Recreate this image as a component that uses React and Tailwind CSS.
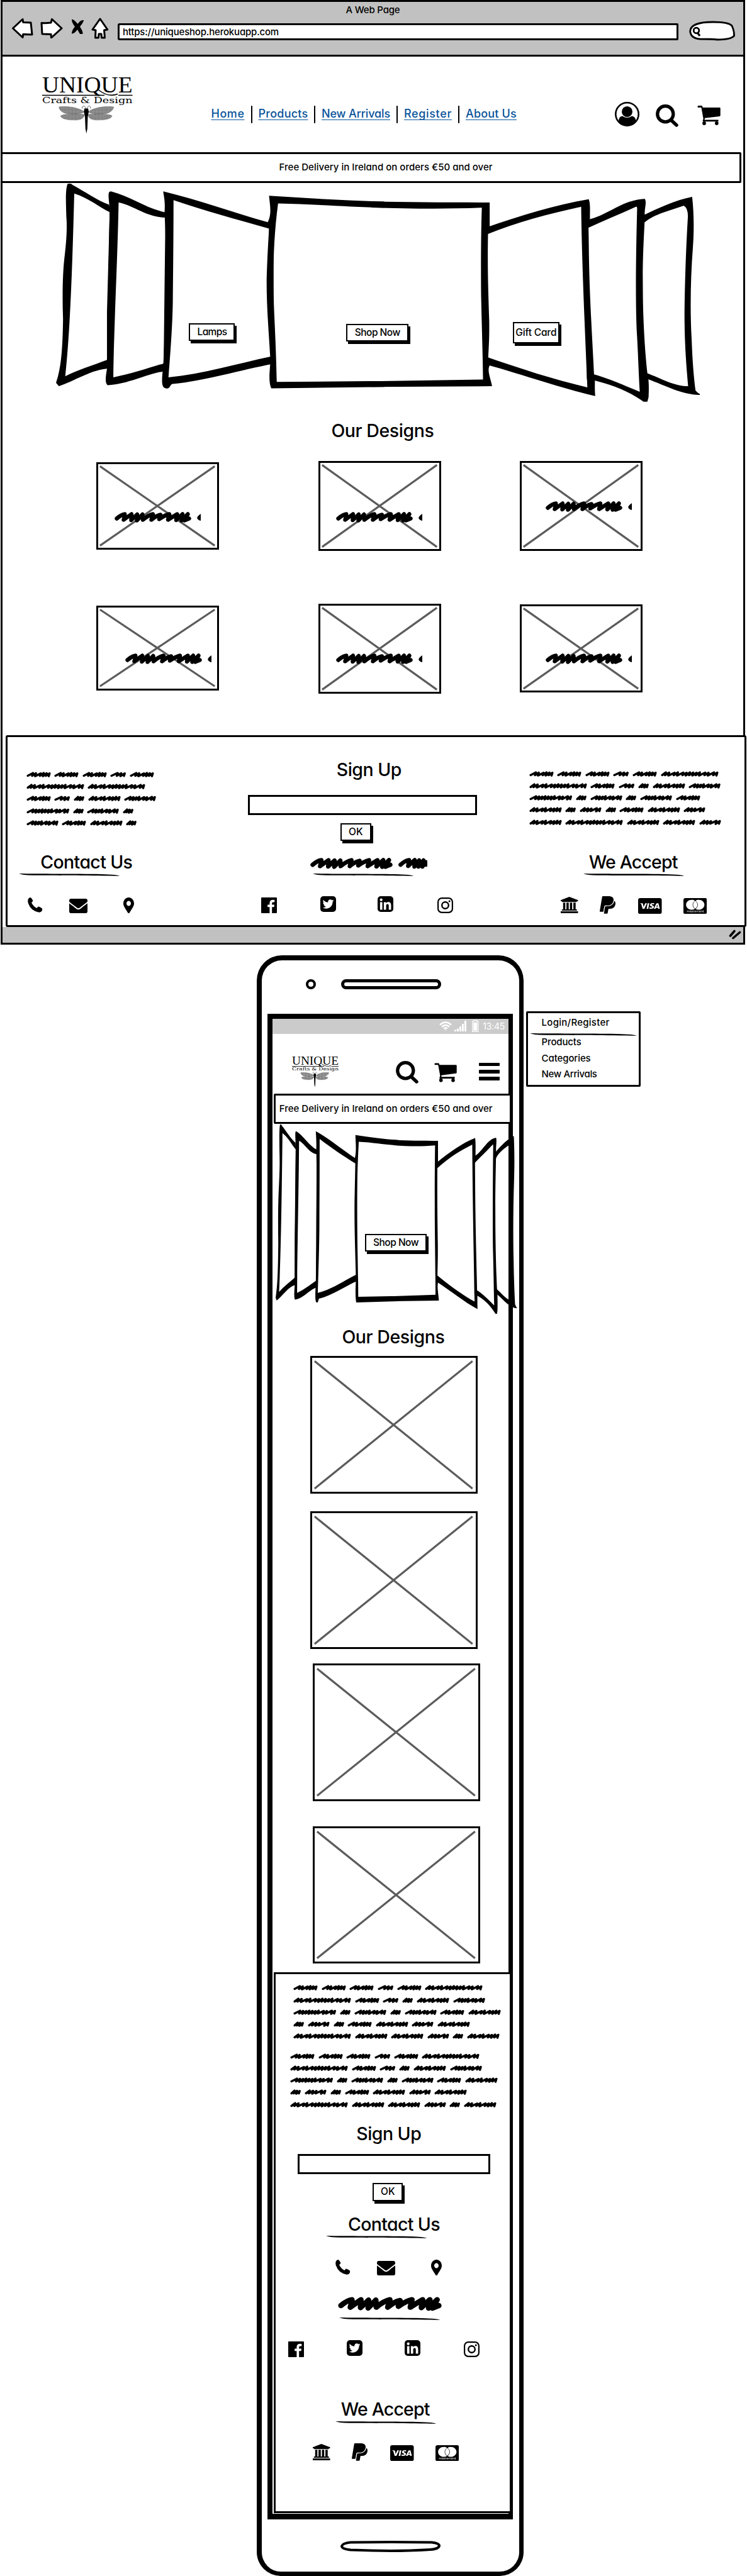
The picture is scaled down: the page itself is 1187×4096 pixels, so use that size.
import { useLayoutEffect, useRef } from "react";
import { FaCcMastercard, FaCcVisa, FaEnvelope, FaLinkedin, FaMapMarkerAlt, FaPaypal, FaTwitterSquare } from "react-icons/fa";

/* Text whose letter spacing is adjusted so that it fills the width of its box. */
function Fit({ className = "", children }) {
  const outer = useRef(null);
  const inner = useRef(null);
  useLayoutEffect(() => {
    const el = inner.current;
    el.style.letterSpacing = "0px";
    const gap = outer.current.clientWidth - el.getBoundingClientRect().width;
    el.style.letterSpacing = `${gap / String(children).length}px`;
  }, [children]);
  return (
    <span ref={outer} className={`block shrink-0 whitespace-nowrap ${className}`}>
      <span ref={inner}>{children}</span>
    </span>
  );
}

const Heading = ({ className, children }) => (
  <h2 className="text-[28.500px] leading-[34px] font-[450]">
    <Fit className={className}>{children}</Fit>
  </h2>
);

function Button({ className, text, children }) {
  return (
    <button className={`flex shrink-0 items-center justify-center border-2 border-black bg-white text-[15.500px] leading-5 font-medium shadow-[3px_4px_0_#000] ${className}`}>
      <Fit className={text}>{children}</Fit>
    </button>
  );
}

/* ---------- logo ---------- */

function Logo({ className, id }) {
  return (
    <svg className={`overflow-visible ${className}`} viewBox="67 112.500 143.500 101" preserveAspectRatio="none">
      <defs>
        <pattern id={id} width="2.400" height="2.400" patternUnits="userSpaceOnUse">
          <rect width="2.400" height="2.400" fill="#b4b4b4" />
          <path d="M0 0L1.200 1.200M2.400 .8L1.200 2.400M0 2H.8" stroke="#222" strokeWidth=".5" />
        </pattern>
      </defs>
      <text x="67" y="147.600" fontSize="36.500" fontFamily="Liberation Serif, serif" textLength="143.500" lengthAdjust="spacingAndGlyphs">UNIQUE</text>
      <path d="M156 143Q172 156 187 150" fill="none" stroke="#000" strokeWidth="1.600" />
      <path d="M67 152H166M188 152H210.500" stroke="#000" strokeWidth="1.600" />
      <text x="67" y="164.200" fontSize="13.500" fontFamily="DejaVu Serif, serif" textLength="143.500" lengthAdjust="spacingAndGlyphs">Crafts &amp; Design</text>
      <g fill={`url(#${id})`} stroke="#555" strokeWidth=".4">
        <path d="M134.500 178.500C124 171 108 169 93.600 170.500C94 176 101 181.500 109 181.500C120 182 128 182 134.500 178.500Z" />
        <path d="M139.500 178.500C150 171 166 169 180.800 170.500C180 176 173 181.500 165 181.500C154 182 146 182 139.500 178.500Z" />
        <path d="M134.500 182.500C122 181 103 181 96.500 184.500C96 188 104 191.500 116 191.300C126 192 133 190 134.500 182.500Z" />
        <path d="M139.500 182.500C152 181 171 181 178 184.500C178 188 170 191.500 158 191.300C148 192 141 190 139.500 182.500Z" />
      </g>
      <path d="M134 173H140L141 178L139.500 186L138.800 205L137.300 213L135.800 205L135 186L133.300 178Z" />
      <path d="M136 173Q135.500 169 132.500 169.200Q130 170 130.500 173M138.500 173Q139 169 142 169.200Q144.500 170 144 173" fill="none" stroke="#222" strokeWidth=".7" />
    </svg>
  );
}

/* ---------- icons ---------- */

const UserIcon = () => (
  <svg className="mt-[72px] ml-[155.500px] h-[39px] w-[39px] shrink-0" viewBox="0 0 39 39">
    <circle cx="19.500" cy="19.500" r="18.200" fill="#fff" stroke="#000" strokeWidth="2.600" />
    <ellipse cx="19.500" cy="15.500" rx="8.500" ry="8.600" />
    <path d="M6 30Q6.500 23 12 22.500Q19.500 27.500 27 22.500Q32.500 23 33.500 30Q28 38.500 19.500 38.500Q11 38.500 6 30Z" />
  </svg>
);

const SearchIcon = ({ className }) => (
  <svg className={`shrink-0 ${className}`} viewBox="0 0 36 36" fill="none" stroke="#000">
    <ellipse cx="15.300" cy="15.200" rx="12.600" ry="12.600" strokeWidth="5.200" />
    <path d="M25.500 26L33 33" strokeWidth="5.400" strokeLinecap="round" />
  </svg>
);

const CartIcon = ({ className }) => (
  <svg className={`shrink-0 ${className}`} viewBox="0 0 37 31">
    <path d="M1.300 0H7.200Q8.300 0.500 8.600 3H35.500Q36.700 3 36.700 4.200V15.600Q36.700 16.600 35.500 16.900L12 19.800L11.500 22.500H33.300Q34 24 33.300 25.200H9.500Q8.300 25 8.700 23.500L9.700 21L6.400 3H1.300Q-.5 1.500 1.300 0Z" />
    <circle cx="11" cy="28" r="2.900" />
    <circle cx="30.800" cy="28" r="2.900" />
  </svg>
);

const PhoneIcon = ({ className }) => (
  <svg className={`h-6 w-[23.500px] shrink-0 ${className}`} viewBox="0 0 23.500 24">
    <path d="M4 0Q6.200 .2 8.300 5.300Q8 6.800 6 8.300Q9 14.500 14.500 17L16.500 14.500Q18.500 14.300 23 17.500Q24 23.500 18 23.700Q5 21.500 .7 9Q-1 1.500 4 0Z" />
  </svg>
);

const MailIcon = ({ className }) => <FaEnvelope className={`shrink-0 ${className}`} viewBox="0 64 512 384" preserveAspectRatio="none" />;
const PinIcon = ({ className }) => <FaMapMarkerAlt className={`shrink-0 ${className}`} viewBox="0 0 384 512" preserveAspectRatio="none" />;

const FacebookIcon = ({ className }) => (
  <svg className={`h-[25px] w-[25px] shrink-0 ${className}`} viewBox="0 0 25 25">
    <path d="M1 0H24Q25 0 25 1V24Q25 25 24 25H17.200V15.300H20.500L21 11.600H17.200V9Q17.200 7.400 19 7.400H21.300V4Q13.400 3 13.400 9V11.600H10.200V15.300H13.400V25H1Q0 25 0 24V1Q0 0 1 0Z" />
  </svg>
);

const InstagramIcon = ({ className }) => (
  <svg className={`h-[25px] w-[25px] shrink-0 ${className}`} viewBox="0 0 25 25" fill="none" stroke="#000">
    <rect x="1.100" y="1.100" width="22.800" height="22.800" rx="6" strokeWidth="2.200" />
    <circle cx="12.500" cy="12.500" r="5.300" strokeWidth="2.400" />
    <circle cx="19.200" cy="5.900" r="1.500" fill="#000" stroke="none" />
  </svg>
);

const BankIcon = ({ className }) => (
  <svg className={`h-[26px] w-[27.500px] shrink-0 ${className}`} viewBox="0 0 27.500 26">
    <path d="M13.700 0L27.500 5.300V7H25.500V8.200H2V7H0V5.300ZM3.800 9.200H7.300V20H9.100V9.200H12.700V20H14.600V9.200H18.200V20H20.100V9.200H23.700V20H25.700V22H1.800V20H3.800ZM0 23H27.500V26H0Z" />
  </svg>
);

const ContactIcons = ({ className, first }) => (
  <div className={`flex items-start ${className}`}>
    <PhoneIcon className={first} />
    <MailIcon className="mt-[2px] ml-[42px] h-[23px] w-[29px]" />
    <PinIcon className="ml-[57px] h-[25.500px] w-[17px]" />
  </div>
);

const SocialIcons = ({ className }) => (
  <div className={`flex items-start ${className}`}>
    <FacebookIcon className="mt-[2px]" />
    <FaTwitterSquare className="ml-[68.600px] h-[25px] w-[25px] shrink-0 rounded-[5px]" viewBox="0 32 448 448" />
    <FaLinkedin className="ml-[66.300px] h-[25px] w-[25px] shrink-0 rounded-[5px]" viewBox="0 32 448 448" />
    <InstagramIcon className="mt-[2px] ml-[69.700px]" />
  </div>
);

const PaymentIcons = ({ className }) => (
  <div className={`flex items-start ${className}`}>
    <BankIcon className="mt-[1.300px]" />
    <FaPaypal className="ml-[34px] h-[29.500px] w-[25px] shrink-0" viewBox="0 30 384 482" preserveAspectRatio="none" />
    <FaCcVisa className="mt-[3px] ml-[36.500px] h-[25.300px] w-[37.500px] shrink-0" viewBox="0 32 576 448" preserveAspectRatio="none" />
    <FaCcMastercard className="mt-[3px] ml-[34px] h-[25.300px] w-[37.500px] shrink-0" viewBox="0 32 576 448" preserveAspectRatio="none" />
  </div>
);

/* ---------- hand-drawn marks ---------- */

const Underline = ({ className }) => (
  <svg className={`h-1 shrink-0 ${className}`} viewBox="0 0 160 4" preserveAspectRatio="none">
    <path d="M0 0C30 .6 90 .2 130 1Q158 1.500 160 4C120 2.800 60 3 22 2.700Q5 2.500 0 0Z" />
  </svg>
);

const SCRIBBLE =
  "M3.500 10.500Q11 4 16.500 3.500Q17 4 14.500 12.500Q22 7 27 3.500L26.500 13L36 4L35.500 13.500L44.500 4L45 12.500Q54 5 61 3.500L58.500 12.500Q66 6 73 4.500L71 11.500Q80 5 87 3.500L85 12.500Q92 8 99.500 3.500L98 13L108 3.500L106.500 13.500L116.500 3.500L111 13.500L118.500 10.500";

function Scribble({ className, tail = false }) {
  return (
    <svg className={`shrink-0 ${className}`} viewBox={tail ? "0 0 137 17" : "0 0 122 17"} preserveAspectRatio="none">
      <path d={SCRIBBLE} fill="none" stroke="#000" strokeWidth="6.400" strokeLinecap="round" strokeLinejoin="round" />
      {tail && <path d="M137 3Q131 7 131.200 10Q133 13.500 137 14Z" />}
    </svg>
  );
}

const WORD_WIDTH = { a: 17.4, b: 25.5, c: 35, d: 39, e: 52, f: 51.2, g: 68.5, h: 92 };
const WORD_RHYTHM = { a: "nnn", b: "wnn", c: "nnnwn", d: "wnwnnn", e: "nnwnwnnn", f: "wnnnwnwn", g: "wnnnnnnwnwn", h: "nnwnwnnnnnwnwn" };

function Word({ kind }) {
  const width = WORD_WIDTH[kind];
  const steps = WORD_RHYTHM[kind].split("").map((s) => (s === "w" ? 6.5 : 4));
  const scale = (width - 5) / steps.reduce((sum, s) => sum + s, 0);
  let x = 2.2;
  let d = `M${x} 6.500`;
  steps.forEach((step, i) => {
    x += step * scale;
    d += `L${x + 0.6} ${2.2 + (i % 3) * 0.3}L${x - 0.7} ${6.6 + (i % 2) * 0.5}`;
  });
  return (
    <svg className="h-[9px] shrink-0" width={width} viewBox={`0 0 ${width} 9`}>
      <path d={d} fill="none" stroke="#000" strokeWidth="3.500" strokeLinecap="round" strokeLinejoin="round" />
    </svg>
  );
}

const Paragraph = ({ lines, className }) => (
  <div className={className}>
    {lines.map((line, i) => (
      <div key={i} className="flex h-[19.250px] items-center gap-[5.500px]">
        {line.split("").map((kind, j) => (
          <Word key={j} kind={kind} />
        ))}
      </div>
    ))}
  </div>
);

const SHORT_TEXT = ["dddbd", "hh", "dbaef", "gafa", "fdea"];
const WIDE_TEXT = ["dddbdh", "hdbaef", "gafafd", "eacadec", "eheec"];
const PHONE_TEXT = ["dddbdh", "hdbaef", "gafafde", "acadece", "heecae"];

function Placeholder({ className, children }) {
  return (
    <div className={`grid shrink-0 border-[3px] border-black bg-white ${className}`}>
      <svg className="h-full w-full [grid-area:1/1]" viewBox="0 0 100 100" preserveAspectRatio="none">
        <path d="M1.500 2.500L98 97.500M98 2.500L1.500 97.500" stroke="#5c5c5c" strokeWidth="3.200" vectorEffect="non-scaling-stroke" />
      </svg>
      {children}
    </div>
  );
}

/* Fan of seven cards, the middle one facing the viewer. */
const Carousel = ({ className }) => (
  <svg className={`[grid-area:1/1] ${className}`} viewBox="88.700 291.900 1023 346.700" preserveAspectRatio="none" fillRule="evenodd">
    <g transform="translate(60.800 279.700) scale(.349 .2715)">
      <path d="M133 46Q147 40 155 52C210 90 270 145 322 168L335 300L330 1128C250 1125 160 1205 93 1231L80 1212C105 1120 110 1000 112 840C108 700 110 560 120 460C130 350 130 280 127 240C125 150 122 80 133 46ZM163 103C230 130 280 185 324 212L312 1077C250 1108 180 1135 122 1173C145 900 155 500 163 103Z" />
      <path d="M330 90C420 120 490 190 580 214L590 1145C520 1140 420 1220 315 1225C303 1215 305 1180 312 1130L312 800L324 230C326 160 313 110 323 93ZM365 155C430 170 490 240 578 244L570 1098C500 1125 420 1160 341 1179C343 900 360 500 365 155Z" />
      <path d="M568 90C730 140 890 215 1044 271L1070 290L1070 1100C920 1135 760 1200 610 1218C600 1219 600 1245 585 1245C562 1243 560 1220 565 1150L569 1090L580 800C583 600 582 400 574 214C578 150 571 120 568 90ZM615 142C760 205 900 255 1050 308L1060 1057C900 1100 750 1160 592 1179C600 1050 612 850 612 700C614 500 615 300 615 142Z" />
      <path d="M1050 116C1220 130 1400 145 1575 150L1575 1236L1060 1244C1045 1200 1055 1130 1055 1100L1055 1057C1048 900 1038 760 1039 600C1042 480 1046 390 1050 308L1044 271C1065 220 1052 160 1050 116ZM1091 161C1250 165 1400 180 1575 186L1575 1201L1085 1206C1080 900 1070 800 1070 600C1070 450 1075 320 1091 161Z" />
    </g>
    <g transform="translate(593.500 279.700) scale(.3785 .2715)">
      <path d="M1130 232C1190 190 1270 140 1337 122C1345 220 1345 330 1340 420C1330 600 1328 800 1335 960C1338 1080 1344 1180 1351 1256Q1358 1270 1369 1277L1369 1283C1290 1280 1230 1230 1150 1190L1130 1180ZM1130 282C1170 225 1240 205 1302 174Q1320 190 1319 240C1312 400 1305 650 1305 850C1306 1000 1313 1120 1320 1231C1260 1232 1200 1180 1130 1145Z" />
      <path d="M895 257C980 235 1040 140 1139 134C1147 160 1136 190 1138 225C1138 300 1128 450 1130 650C1130 850 1140 1050 1149 1155C1157 1200 1155 1260 1154 1295L1149 1322L1133 1322C1080 1270 1020 1230 925 1197L895 1190ZM895 307C960 265 1030 225 1101 180Q1106 178 1106 190C1102 400 1098 700 1104 900C1110 1030 1112 1150 1117 1264C1050 1225 990 1185 910 1156Z" />
      <path d="M470 303C620 230 760 170 903 136C911 165 907 210 908 250C898 260 903 300 903 400C905 700 918 950 925 1162C932 1190 926 1220 930 1289C780 1240 640 1170 470 1103ZM470 345C600 270 740 220 871 180C874 500 885 850 897 1238C750 1190 620 1130 470 1058Z" />
      <path d="M-10 149C150 154 300 155 487 155L487 297L480 340C477 560 482 700 485 850C486 950 483 1000 481 1065L487 1109C475 1140 490 1180 497 1231L-10 1236ZM-10 185C150 192 300 195 454 186C450 350 450 550 451 700C454 900 458 1050 459 1192L-10 1202Z" />
    </g>
  </svg>
);

/* ---------- desktop window ---------- */

function Toolbar() {
  return (
    <div className="h-[87px] border-b-[3px] border-black bg-[#c1c1c1]">
      <div className="flex h-[25px] justify-center text-[15px] leading-[25px] font-medium">
        <Fit className="w-[86px]">A Web Page</Fit>
      </div>
      <div className="flex items-start">
        <svg className="ml-[14px] h-[33px] w-[37px] shrink-0" viewBox="0 0 37 33" fill="#fff" stroke="#000" strokeWidth="3" strokeLinejoin="round">
          <path d="M2.500 17L18 2.500L18.800 7.500L31 8L33 27L18.800 26.500L18 31.500Z" />
        </svg>
        <svg className="ml-[8px] h-[33px] w-[37px] shrink-0" viewBox="0 0 37 33" fill="#fff" stroke="#000" strokeWidth="3" strokeLinejoin="round">
          <path d="M3 8.500Q10 9 18 8L19.500 2.500L35 17L18.500 32L18 26.500L4 26Z" />
        </svg>
        <svg className="mt-[2px] ml-[13px] h-[25px] w-[21px] shrink-0" viewBox="0 0 21 25">
          <path d="M1 1Q3-.5 10.500 8Q15 1 20 2Q20 5 14 12.500Q19 20 18.500 24L14 24L10 17Q5 24 1 23.500Q1 18 6 12.500Q1 6 1 1Z" />
        </svg>
        <svg className="ml-[11px] h-[34px] w-[28px] shrink-0" viewBox="0 0 28 34" fill="#fff" stroke="#000" strokeWidth="3" strokeLinejoin="round">
          <path d="M14 2L25.800 19L20.500 20L21.500 32H16.500L16 26H12L11.500 32H6.500L7 20L2 19Z" />
        </svg>
        <div className="mt-[9px] ml-[14px] flex h-[27px] w-[890.500px] shrink-0 items-center rounded-l-[3px] rounded-r-[2px] border-[3px] border-black bg-white pl-[5px] text-[15px] font-medium">
          <Fit className="w-[248px] leading-5">https://uniqueshop.herokuapp.com</Fit>
        </div>
        <svg className="mt-[5px] ml-[17px] h-[32px] w-[74px] shrink-0" viewBox="0 0 74 32" fill="none" stroke="#000" strokeWidth="2.800">
          <path d="M17 29Q3 28 1.700 17Q2 2 38 2Q63 2 68 8Q72 17 71.500 24Q66 30 45 30Q35 29 17 29Z" fill="#fff" />
          <ellipse cx="11.500" cy="15.500" rx="4.300" ry="4.300" />
          <path d="M13 19L17 24" strokeWidth="3.400" />
        </svg>
      </div>
    </div>
  );
}

const Divider = () => <span className="mx-[10px] h-[28.500px] w-[2px] shrink-0 rounded-full bg-black" />;

const NavLink = ({ className, children }) => (
  <a className="leading-[26px] text-[#08539b] underline decoration-[1.300px] underline-offset-[3px] [text-decoration-skip-ink:none]">
    <Fit className={className}>{children}</Fit>
  </a>
);

function SiteHeader() {
  return (
    <header className="flex h-[151.500px] items-start">
      <Logo id="wing-large" className="mt-[22px] ml-[63px] h-[101px] w-[143.500px] shrink-0" />
      <nav className="mt-[77.500px] ml-[125px] flex shrink-0 text-[18px] font-[450]">
        <NavLink className="w-[53px]">Home</NavLink>
        <Divider />
        <NavLink className="w-[78.500px]">Products</NavLink>
        <Divider />
        <NavLink className="w-[109px]">New Arrivals</NavLink>
        <Divider />
        <NavLink className="w-[76px]">Register</NavLink>
        <Divider />
        <NavLink className="w-[81px]">About Us</NavLink>
      </nav>
      <UserIcon />
      <SearchIcon className="mt-[75.500px] ml-[26.500px] h-[36px] w-[36px]" />
      <CartIcon className="mt-[78px] ml-[30px] h-[31px] w-[37px]" />
    </header>
  );
}

function DesktopFooter() {
  return (
    <footer className="ml-[5px] flex h-[305px] w-[1177px] rounded-[3px] border-[3px] border-black bg-white">
      <div className="w-[380px] shrink-0">
        <Paragraph lines={SHORT_TEXT} className="mt-[49.700px] ml-[29.600px]" />
        <div className="mt-[36px] ml-[52.300px]">
          <Heading className="w-[146px]">Contact Us</Heading>
        </div>
        <Underline className="mt-[1.300px] ml-[17.500px] w-[160px]" />
        <ContactIcons className="mt-[33.500px]" first="ml-[32.300px]" />
      </div>
      <div className="flex w-[368px] shrink-0 flex-col items-start">
        <div className="mt-[35px] ml-[142.800px]">
          <Heading className="w-[103px]">Sign Up</Heading>
        </div>
        <div className="mt-[22.800px] ml-[2.400px] h-[32px] w-[364px] border-[3px] border-black" />
        <Button className="mt-[13.200px] ml-[149px] h-[28.500px] w-[48.500px]" text="w-[22.500px]">OK</Button>
        <div className="mt-[27px] ml-[100.800px] flex items-start gap-[9px]">
          <Scribble className="h-[18px] w-[131px]" />
          <svg className="h-[18px] w-[46px]" viewBox="0 0 46 18">
            <path d="M3.500 11Q11 4 17 3.500L15.500 13Q21 8 26 3.500L25.500 14L33 4L32 14L40 4L38 14L44 7V11" fill="none" stroke="#000" strokeWidth="6.600" strokeLinecap="round" strokeLinejoin="round" />
          </svg>
        </div>
        <Underline className="mt-[6.800px] ml-[104.600px] w-[160px]" />
        <SocialIcons className="mt-[31.500px] ml-[23.200px]" />
      </div>
      <div className="w-[423px] shrink-0">
        <Paragraph lines={WIDE_TEXT} className="mt-[48.500px] ml-[80.700px]" />
        <div className="mt-[37.200px] ml-[175.700px]">
          <Heading className="w-[141px]">We Accept</Heading>
        </div>
        <Underline className="mt-[1.300px] ml-[167px] w-[160px]" />
        <PaymentIcons className="mt-[31.500px] ml-[131.400px]" />
      </div>
    </footer>
  );
}

function DesktopWindow() {
  return (
    <section className="ml-px flex h-[1502px] w-[1183px] flex-col border-[3px] border-black bg-white [&>*]:shrink-0">
      <Toolbar />
      <SiteHeader />
      <div className="-ml-[3px] flex h-[49.500px] w-[1177px] items-center rounded-[2px] border-[3px] border-black pl-[439.600px] text-[15px] font-medium">
        <Fit className="w-[338.500px]">Free Delivery in Ireland on orders €50 and over</Fit>
      </div>
      <div className="ml-[84.700px] grid h-[377px] w-[1023px] items-start">
        <Carousel className="mt-[1px] h-[346.700px] w-[1023px]" />
        <div className="flex items-start [grid-area:1/1]">
          <Button className="mt-[222.500px] ml-[211.300px] h-[28.500px] w-[73.500px]" text="w-[46.500px]">Lamps</Button>
          <Button className="mt-[223.700px] ml-[177px] h-[28.500px] w-[98.500px]" text="w-[72px]">Shop Now</Button>
          <Button className="mt-[220.700px] ml-[165.600px] h-[34px] w-[74px]" text="w-[64.500px]">Gift Card</Button>
        </div>
      </div>
      <div className="ml-[522.400px]">
        <Heading className="w-[163px]">Our Designs</Heading>
      </div>
      <div className="mt-[31.400px] flex h-[226.300px] items-start">
        <Placeholder className="mt-[1.600px] ml-[149px] h-[139px] w-[195px]">
          <Scribble tail className="mt-[76.500px] ml-[25.500px] h-[17px] w-[137px] [grid-area:1/1]" />
        </Placeholder>
        <Placeholder className="ml-[157.700px] h-[143px] w-[195px]">
          <Scribble tail className="mt-[78px] ml-[25.500px] h-[17px] w-[137px] [grid-area:1/1]" />
        </Placeholder>
        <Placeholder className="ml-[125.800px] h-[143px] w-[195px]">
          <Scribble tail className="mt-[61px] ml-[38px] h-[17px] w-[137px] [grid-area:1/1]" />
        </Placeholder>
      </div>
      <div className="flex h-[209.300px] items-start">
        <Placeholder className="mt-[3.700px] ml-[149px] h-[134.500px] w-[195px]">
          <Scribble tail className="mt-[72.500px] ml-[42.500px] h-[17px] w-[137px] [grid-area:1/1]" />
        </Placeholder>
        <Placeholder className="ml-[157.700px] h-[143px] w-[195px]">
          <Scribble tail className="mt-[76.500px] ml-[25.500px] h-[17px] w-[137px] [grid-area:1/1]" />
        </Placeholder>
        <Placeholder className="mt-[1.300px] ml-[125.800px] h-[140.500px] w-[195px]">
          <Scribble tail className="mt-[75px] ml-[38px] h-[17px] w-[137px] [grid-area:1/1]" />
        </Placeholder>
      </div>
      <DesktopFooter />
      <div className="flex flex-1 items-center justify-end bg-[#c1c1c1] pr-[3px]">
        <svg className="h-[16px] w-[20px]" viewBox="0 0 20 16" stroke="#000" strokeWidth="3.600" strokeLinecap="round">
          <path d="M2.500 10L9 2.500M7 13.500L17.500 4.500" />
        </svg>
      </div>
    </section>
  );
}

/* ---------- phone ---------- */

function StatusBar() {
  return (
    <div className="flex h-[24.500px] items-center justify-end bg-[#cbcbcb] pr-[5.500px] text-[14px] text-white">
      <svg className="h-[15px] w-[20px]" viewBox="0 0 20 15" fill="none" stroke="#fff" strokeWidth="2.600">
        <path d="M1 5.500Q10-2.500 19 5.500M4 8.800Q10 3.500 16 8.800M7 11.500Q10 9 13 11.500" />
        <path d="M8.500 12.500H11.500L10 15Z" fill="#fff" stroke="none" />
      </svg>
      <svg className="ml-[4px] h-[17px] w-[19px]" viewBox="0 0 19 17" fill="#fff">
        <path d="M0 14.500H3V17H0ZM4 12.500H7V17H4ZM8 9H11V17H8ZM12 5H15V17H12ZM16 0H19V17H16Z" />
      </svg>
      <svg className="ml-[9px] h-[19px] w-[10.500px]" viewBox="0 0 10.500 19" fill="none" stroke="#fff" strokeWidth="1.200">
        <path d="M3 1.800V.6H7.500V1.800H9.800V18.300H.7V1.800Z" />
        <path d="M2.200 3.700H8.300V16.800H2.200Z" fill="#fff" stroke="none" />
      </svg>
      <Fit className="ml-[6.500px] w-[35px]">13:45</Fit>
    </div>
  );
}

function PhoneFooter() {
  return (
    <footer className="mt-[13.200px] ml-[2px] flex h-[860.300px] w-[378.500px] flex-col items-start border-[3px] border-black bg-white [&>*]:shrink-0">
      <Paragraph lines={PHONE_TEXT} className="mt-[12.800px] ml-[28.500px]" />
      <Paragraph lines={PHONE_TEXT} className="mt-[12px] ml-[23.600px]" />
      <div className="mt-[20.400px] ml-[128.600px]">
        <Heading className="w-[103px]">Sign Up</Heading>
      </div>
      <div className="mt-[14.800px] ml-[35.600px] h-[32px] w-[306px] border-[3px] border-black" />
      <Button className="mt-[14.200px] ml-[154.200px] h-[28.500px] w-[48.500px]" text="w-[22.500px]">OK</Button>
      <div className="mt-[20px] ml-[115.300px]">
        <Heading className="w-[146px]">Contact Us</Heading>
      </div>
      <Underline className="mt-[1.600px] ml-[80.700px] w-[160px]" />
      <ContactIcons className="mt-[33.400px]" first="ml-[95.600px]" />
      <Scribble className="mt-[34.200px] ml-[99px] h-[22.600px] w-[165px]" />
      <Underline className="mt-[10.300px] ml-[101px] w-[160px]" />
      <SocialIcons className="mt-[31.500px] ml-[20px]" />
      <div className="mt-[66.300px] ml-[104px]">
        <Heading className="w-[141px]">We Accept</Heading>
      </div>
      <Underline className="mt-[1.500px] ml-[95.300px] w-[160px]" />
      <PaymentIcons className="mt-[31.600px] ml-[59.700px]" />
    </footer>
  );
}

function Phone() {
  return (
    <section className="ml-[407.500px] flex h-[2577px] w-[424.500px] shrink-0 flex-col rounded-t-[40px] rounded-b-[38px] border-t-[8px] border-r-[7px] border-b-[7px] border-l-[8px] border-black bg-white [&>*]:shrink-0">
      <div className="mt-[30.400px] flex h-[16px]">
        <span className="ml-[70.500px] h-[16px] w-[16px] rounded-full border-[4.500px] border-black" />
        <span className="ml-[40.300px] h-[16px] w-[159px] rounded-full border-[5px] border-black" />
      </div>
      <div className="mt-[38.200px] ml-[9.200px] flex h-[2394.700px] w-[390px] flex-col border-t-[8.500px] border-r-[7px] border-b-[9px] border-l-[8px] border-black [&>*]:shrink-0">
        <StatusBar />
        <header className="flex h-[95.300px] items-start">
          <Logo id="wing-small" className="mt-[30px] ml-[31px] h-[55px] w-[74px] shrink-0" />
          <SearchIcon className="mt-[43px] ml-[91px] h-[36px] w-[36px]" />
          <CartIcon className="mt-[45.500px] ml-[25px] h-[31px] w-[36px]" />
          <div className="mt-[45.700px] ml-[35.400px] flex w-[33px] flex-col gap-[5.600px]">
            <span className="h-[5.600px] rounded-[1px] bg-black" />
            <span className="h-[5.600px] rounded-[1px] bg-black" />
            <span className="h-[5.600px] rounded-[1px] bg-black" />
          </div>
        </header>
        <div className="ml-[2px] flex h-[47.500px] w-[378.500px] items-center rounded-[2px] border-[3px] border-black bg-white pl-[6px] text-[15px] font-medium">
          <Fit className="w-[338.500px]">Free Delivery in Ireland on orders €50 and over</Fit>
        </div>
        <div className="ml-[5.300px] grid h-[322px] w-[383px] items-start">
          <Carousel className="mt-[1px] h-[301.400px] w-[383px]" />
          <div className="[grid-area:1/1]">
            <Button className="mt-[175px] ml-[141.800px] h-[28.500px] w-[98.500px]" text="w-[72px]">Shop Now</Button>
          </div>
        </div>
        <div className="ml-[110.700px]">
          <Heading className="w-[163px]">Our Designs</Heading>
        </div>
        <Placeholder className="mt-[13.200px] ml-[60.200px] h-[219.300px] w-[266px]" />
        <Placeholder className="mt-[27.600px] ml-[60.200px] h-[219.300px] w-[266px]" />
        <Placeholder className="mt-[22.600px] ml-[63.900px] h-[218.700px] w-[266px]" />
        <Placeholder className="mt-[40.800px] ml-[63.900px] h-[218px] w-[266px]" />
        <PhoneFooter />
      </div>
      <svg className="mt-[33.500px] ml-[125px] h-[18px] w-[159px]" viewBox="0 0 159 18" fill="none" stroke="#000" strokeWidth="4">
        <path d="M16 2.500Q80 1.500 145 2.500Q157 4 157 8Q156 13 143 14Q110 16 80 16Q50 15.500 16 14.500Q2 13 2 8.500Q3 4 16 2.500Z" />
      </svg>
    </section>
  );
}

const Menu = () => (
  <aside className="mt-[89px] ml-[4px] flex h-[120px] w-[182px] shrink-0 flex-col items-start rounded-[2px] border-[3px] border-black text-[15px] leading-5 font-medium">
    <Fit className="mt-[4.500px] ml-[21.600px] w-[108px]">Login/Register</Fit>
    <Underline className="mt-[7.500px] ml-[3.300px] w-[169.500px]" />
    <Fit className="ml-[21.600px] w-[62.500px]">Products</Fit>
    <Fit className="mt-[5.500px] ml-[21.600px] w-[78px]">Categories</Fit>
    <Fit className="mt-[5.800px] ml-[21.600px] w-[87.500px]">New Arrivals</Fit>
  </aside>
);

export default function App() {
  return (
    <main className="flex h-[4096px] w-[1187px] flex-col overflow-hidden bg-white font-['Inter','Liberation_Sans',sans-serif] text-black [font-feature-settings:'cv11']">
      <DesktopWindow />
      <div className="mt-[17px] flex items-start">
        <Phone />
        <Menu />
      </div>
    </main>
  );
}
